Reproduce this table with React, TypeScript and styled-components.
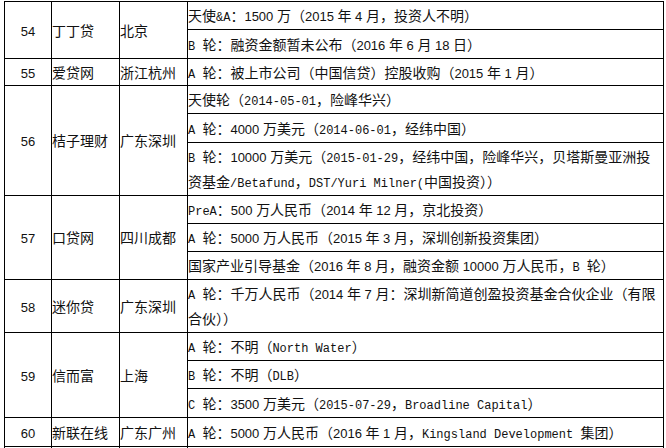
import React from "react";
import styled, { createGlobalStyle } from "styled-components";

type Group = {
  no: string;
  name: string;
  city: string;
  items: { h: number; lines: string[] }[];
};

const groups: Group[] = [
  {
    no: "54",
    name: "丁丁贷",
    city: "北京",
    items: [
      { h: 28, lines: ["天使&A：1500 万（2015 年 4 月，投资人不明）"] },
      { h: 29, lines: ["B 轮：融资金额暂未公布（2016 年 6 月 18 日）"] },
    ],
  },
  {
    no: "55",
    name: "爱贷网",
    city: "浙江杭州",
    items: [{ h: 27, lines: ["A 轮：被上市公司（中国信贷）控股收购（2015 年 1 月）"] }],
  },
  {
    no: "56",
    name: "桔子理财",
    city: "广东深圳",
    items: [
      { h: 28, lines: ["天使轮（2014-05-01，险峰华兴）"] },
      { h: 29, lines: ["A 轮：4000 万美元（2014-06-01，经纬中国）"] },
      {
        h: 53,
        lines: [
          "B 轮：10000 万美元（2015-01-29，经纬中国，险峰华兴，贝塔斯曼亚洲投",
          "资基金/Betafund，DST/Yuri Milner(中国投资））",
        ],
      },
    ],
  },
  {
    no: "57",
    name: "口贷网",
    city: "四川成都",
    items: [
      { h: 28, lines: ["PreA：500 万人民币（2014 年 12 月，京北投资）"] },
      { h: 28, lines: ["A 轮：5000 万人民币（2015 年 3 月，深圳创新投资集团）"] },
      { h: 28, lines: ["国家产业引导基金（2016 年 8 月，融资金额 10000 万人民币，B 轮）"] },
    ],
  },
  {
    no: "58",
    name: "迷你贷",
    city: "广东深圳",
    items: [
      {
        h: 53,
        lines: [
          "A 轮：千万人民币（2014 年 7 月：深圳新简道创盈投资基金合伙企业（有限",
          "合伙））",
        ],
      },
    ],
  },
  {
    no: "59",
    name: "信而富",
    city: "上海",
    items: [
      { h: 28, lines: ["A 轮：不明（North Water）"] },
      { h: 28, lines: ["B 轮：不明（DLB）"] },
      { h: 29, lines: ["C 轮：3500 万美元（2015-07-29，Broadline Capital）"] },
    ],
  },
  {
    no: "60",
    name: "新联在线",
    city: "广东广州",
    items: [{ h: 29, lines: ["A 轮：5000 万人民币（2016 年 1 月，Kingsland Development 集团）"] }],
  },
  { no: "", name: "", city: "", items: [{ h: 28, lines: [""] }] },
];

const GlobalStyle = createGlobalStyle`
  html, body {
    margin: 0;
    background: #fff;
    overflow: hidden;
  }
  body {
    font-family: "Noto Sans CJK SC", sans-serif;
    color: #000;
  }
`;

const Page = styled.div`
  width: 666px;
  height: 448px;
  padding: 1px 0 0 4px;
  box-sizing: border-box;
  overflow: hidden;
`;

const Sheet = styled.div<{ $rows: string }>`
  display: grid;
  grid-template-columns: 47px 68px 68px 476px;
  grid-template-rows: ${(p) => p.$rows};
  border-top: 1px solid #000;
  border-left: 1px solid #000;
  width: max-content;
`;

const Cell = styled.div<{ $col: number; $row: number; $span: number }>`
  grid-column: ${(p) => p.$col};
  grid-row: ${(p) => p.$row} / span ${(p) => p.$span};
  box-sizing: border-box;
  border-right: 1px solid #000;
  border-bottom: 1px solid #000;
  display: flex;
  flex-direction: column;
  justify-content: center;
  overflow: hidden;
  white-space: nowrap;
  font-size: 14px;
  line-height: 25px;
  color: #111;
`;

const NoCell = styled(Cell)`
  align-items: center;
  font-family: "Liberation Sans", Arial, sans-serif;
  font-size: 13px;
  padding-top: 2px;
`;

const Line = styled.div`
  height: 25px;
`;

const Mono = styled.span`
  font-family: "Liberation Mono", "Courier New", monospace;
  font-size: 12px;
`;

const Num = styled.span`
  font-family: "Liberation Sans", Arial, sans-serif;
  font-size: 13px;
`;

function Text({ value }: { value: string }) {
  const parts = value.split(/([\x00-\x7F]+)/).filter(Boolean);
  return (
    <>
      {parts.map((part, i) => {
        if (!/[\x00-\x7F]/.test(part)) return <React.Fragment key={i}>{part}</React.Fragment>;
        if (/^[\d ]+$/.test(part)) return <Num key={i}>{part}</Num>;
        return <Mono key={i}>{part}</Mono>;
      })}
    </>
  );
}

export default function App() {
  const heights = groups.flatMap((g) => g.items.map((it) => `${it.h}px`)).join(" ");
  let row = 1;

  return (
    <Page>
      <GlobalStyle />
      <Sheet $rows={heights}>
        {groups.map((g, gi) => {
          const start = row;
          const span = g.items.length;
          row += span;
          return (
            <React.Fragment key={gi}>
              <NoCell $col={1} $row={start} $span={span}>
                {g.no}
              </NoCell>
              <Cell $col={2} $row={start} $span={span}>
                {g.name}
              </Cell>
              <Cell $col={3} $row={start} $span={span}>
                {g.city}
              </Cell>
              {g.items.map((it, ii) => (
                <Cell key={ii} $col={4} $row={start + ii} $span={1}>
                  {it.lines.map((l, li) => (
                    <Line key={li}>
                      <Text value={l} />
                    </Line>
                  ))}
                </Cell>
              ))}
            </React.Fragment>
          );
        })}
      </Sheet>
    </Page>
  );
}
